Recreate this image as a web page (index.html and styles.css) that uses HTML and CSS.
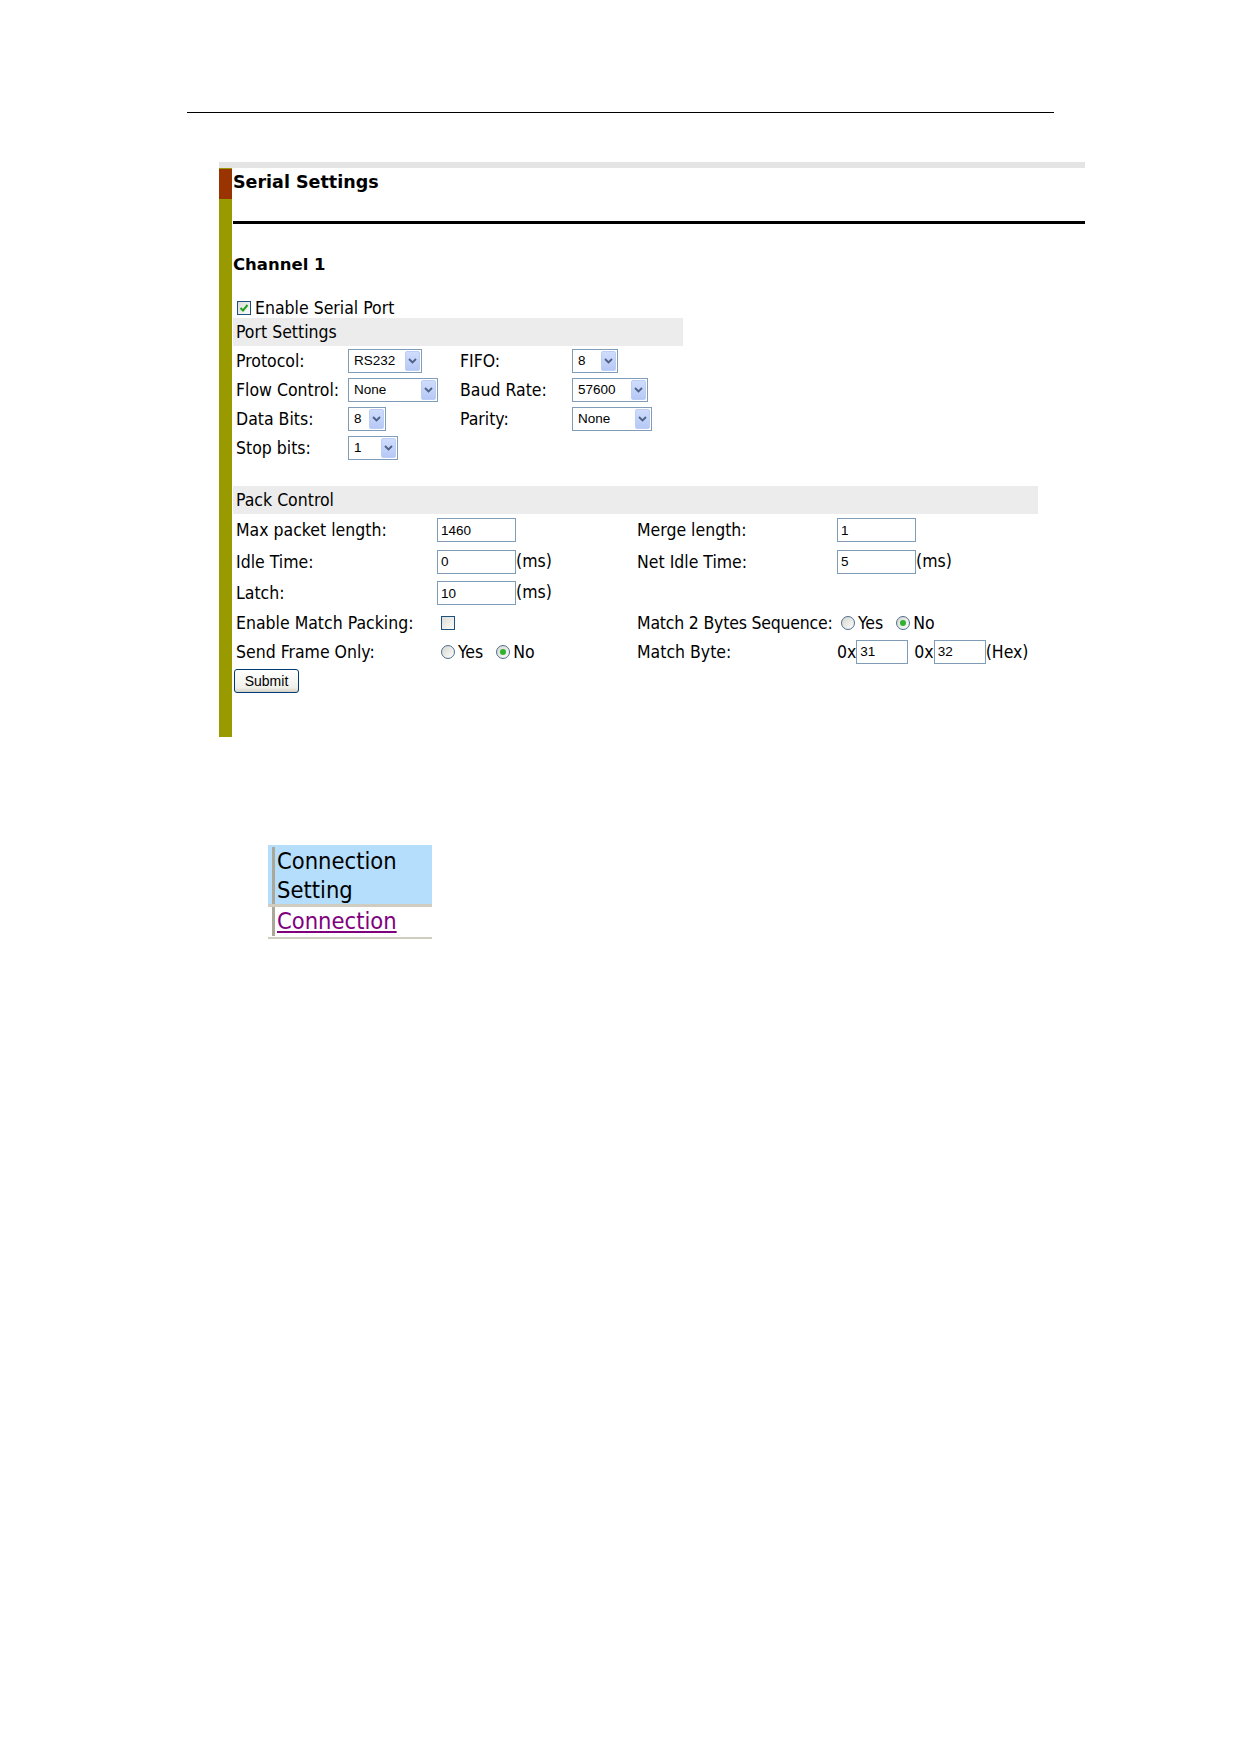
FILE: index.html
```html
<html>
<head>

	<meta charset="utf-8">
	<meta name="viewport" content="width=device-width, user-scalable=no"/>

	<title>Serial Settings</title>

	<link rel="stylesheet" href="styles.css">

</head>
<body>

<div class="page">

	<hr class="rule">

	<div class="panel">
		<div class="panel-top"></div>

		<div class="panel-body">
			<div class="side"><div class="side-mark"></div></div>

			<div class="main">

				<h1>Serial Settings</h1>
				<div class="title-line"></div>

				<h2>Channel 1</h2>

				<div class="enable">
					<span class="chk on"><svg width="10" height="10" viewBox="0 0 10 10"><path d="M1.5 5 L4 7.5 L8.5 2" fill="none" stroke="#21a121" stroke-width="2"/></svg></span>Enable Serial Port
				</div>

				<!-- Port settings -->
				<div class="port">
					<div class="bar">Port Settings</div>

					<div class="lbl">Protocol:</div>
					<div><span class="sel sel-protocol"><span>RS232</span><span class="arrow"><svg width="9" height="6" viewBox="0 0 9 6"><polyline points="1,1 4.5,4.5 8,1" fill="none" stroke="#4d6185" stroke-width="1.8"/></svg></span></span></div>
					<div class="lbl">FIFO:</div>
					<div><span class="sel sel-fifo"><span>8</span><span class="arrow"><svg width="9" height="6" viewBox="0 0 9 6"><polyline points="1,1 4.5,4.5 8,1" fill="none" stroke="#4d6185" stroke-width="1.8"/></svg></span></span></div>

					<div class="lbl">Flow Control:</div>
					<div><span class="sel sel-flow"><span>None</span><span class="arrow"><svg width="9" height="6" viewBox="0 0 9 6"><polyline points="1,1 4.5,4.5 8,1" fill="none" stroke="#4d6185" stroke-width="1.8"/></svg></span></span></div>
					<div class="lbl">Baud Rate:</div>
					<div><span class="sel sel-baud"><span>57600</span><span class="arrow"><svg width="9" height="6" viewBox="0 0 9 6"><polyline points="1,1 4.5,4.5 8,1" fill="none" stroke="#4d6185" stroke-width="1.8"/></svg></span></span></div>

					<div class="lbl">Data Bits:</div>
					<div><span class="sel sel-data"><span>8</span><span class="arrow"><svg width="9" height="6" viewBox="0 0 9 6"><polyline points="1,1 4.5,4.5 8,1" fill="none" stroke="#4d6185" stroke-width="1.8"/></svg></span></span></div>
					<div class="lbl">Parity:</div>
					<div><span class="sel sel-parity"><span>None</span><span class="arrow"><svg width="9" height="6" viewBox="0 0 9 6"><polyline points="1,1 4.5,4.5 8,1" fill="none" stroke="#4d6185" stroke-width="1.8"/></svg></span></span></div>

					<div class="lbl">Stop bits:</div>
					<div><span class="sel sel-stop"><span>1</span><span class="arrow"><svg width="9" height="6" viewBox="0 0 9 6"><polyline points="1,1 4.5,4.5 8,1" fill="none" stroke="#4d6185" stroke-width="1.8"/></svg></span></span></div>
					<div></div>
					<div></div>
				</div>

				<!-- Pack control -->
				<div class="pack">
					<div class="bar">Pack Control</div>

					<div class="lbl">Max packet length:</div>
					<div><input class="txt" type="text" value="1460"></div>
					<div class="lbl">Merge length:</div>
					<div><input class="txt" type="text" value="1"></div>

					<div class="lbl">Idle Time:</div>
					<div><input class="txt" type="text" value="0">(ms)</div>
					<div class="lbl">Net Idle Time:</div>
					<div><input class="txt" type="text" value="5">(ms)</div>

					<div class="lbl">Latch:</div>
					<div><input class="txt" type="text" value="10">(ms)</div>
					<div></div>
					<div></div>

					<div class="lbl">Enable Match Packing:</div>
					<div><span class="chk"></span></div>
					<div class="lbl lbl-tight">Match 2 Bytes Sequence:</div>
					<div class="opts"><span class="opt"><span class="radio"></span>Yes</span><span class="opt"><span class="radio on"></span>No</span></div>

					<div class="lbl">Send Frame Only:</div>
					<div class="opts"><span class="opt"><span class="radio"></span>Yes</span><span class="opt"><span class="radio on"></span>No</span></div>
					<div class="lbl">Match Byte:</div>
					<div class="hex">0x<input class="txt txt-hex" type="text" value="31"> 0x<input class="txt txt-hex" type="text" value="32">(Hex)</div>

					<div><button class="submit" type="button">Submit</button></div>
				</div>

			</div>
		</div>
	</div>

	<div class="conn">
		<div class="conn-head"><div class="conn-cell">Connection<br>Setting</div></div>
		<div class="conn-item"><div class="conn-cell"><a href="#">Connection</a></div></div>
	</div>

</div>

</body>
</html>
```

FILE: styles.css
```css
* {
	margin: 0;
	padding: 0;
}

body {
	font: 17.5px "DejaVu Sans Condensed", "DejaVu Sans", sans-serif;
	color: #000;
	background: #fff;
}

.page {
	padding: 112px 0 60px 187px;
}

.rule {
	width: 867px;
	height: 1px;
	border: 0;
	background: #000;
}


/* Panel */

.panel {
	margin: 49px 0 0 32px;
	width: 866px;
}

.panel-top {
	height: 6px;
	background: #e4e4e4;
}

.panel-body {
	display: flex;
}

.side {
	width: 13px;
	flex: none;
	background: #999900;
	padding-top: 1px;
}

.side-mark {
	height: 30px;
	background: #993300;
}

.main {
	flex: 1;
	padding: 0 0 41px 1px;
}

h1 {
	font: bold 17.5px "DejaVu Sans", sans-serif;
	line-height: 20px;
	margin-top: 4px;
}

.title-line {
	height: 3px;
	background: #000;
	margin-top: 29px;
}

h2 {
	font: bold 16.5px "DejaVu Sans", sans-serif;
	line-height: 20px;
	margin-top: 31px;
}

.enable {
	display: flex;
	align-items: center;
	margin-top: 23px;
	line-height: 20px;
	height: 20px;
}

.enable .chk {
	margin: 0 4px 0 4px;
}


/* Controls */

.chk {
	display: inline-flex;
	align-items: center;
	justify-content: center;
	width: 14px;
	height: 14px;
	box-sizing: border-box;
	border: 1px solid #1c5180;
	background: linear-gradient(135deg, #dcdcd7, #fbfbf9);
}

.radio {
	position: relative;
	display: inline-block;
	width: 14px;
	height: 14px;
	box-sizing: border-box;
	border: 1px solid #4c6d8f;
	border-radius: 50%;
	background: linear-gradient(135deg, #d6d6d0, #fdfdfb);
	margin: 0 3px 0 4px;
}

.radio.on::after {
	content: "";
	position: absolute;
	left: 3px;
	top: 3px;
	width: 6px;
	height: 6px;
	border-radius: 50%;
	background: #31b131;
}

.sel {
	display: inline-flex;
	align-items: center;
	justify-content: space-between;
	height: 24px;
	box-sizing: border-box;
	border: 1px solid #7f9db9;
	background: #fff;
	padding-left: 5px;
	font: 13.5px "Liberation Sans", Arial, sans-serif;
	vertical-align: middle;
}

.sel .arrow {
	display: flex;
	align-items: center;
	justify-content: center;
	width: 15px;
	height: 20px;
	margin-right: 1px;
	border: 1px solid #bccdf6;
	box-sizing: border-box;
	border-radius: 2px;
	background: linear-gradient(#cfdcfd, #b6c9f5);
}

.sel-protocol { width: 74px; }
.sel-flow { width: 90px; }
.sel-data { width: 38px; }
.sel-stop { width: 50px; }
.sel-fifo { width: 46px; }
.sel-baud { width: 76px; }
.sel-parity { width: 80px; }

.txt {
	width: 79px;
	height: 24px;
	box-sizing: border-box;
	border: 1px solid #7f9db9;
	padding: 0 3px;
	font: 13.5px "Liberation Sans", Arial, sans-serif;
	color: #000;
	vertical-align: middle;
	outline: none;
}

.txt-hex {
	width: 52px;
}

.submit {
	width: 65px;
	height: 24px;
	margin-left: 1px;
	border: 1px solid #003c74;
	border-radius: 3px;
	background: linear-gradient(#ffffff, #f0f0ea 80%, #d6d0c5);
	font: 14px "Liberation Sans", Arial, sans-serif;
	color: #000;
}


/* Grids */

.bar {
	grid-column: 1 / -1;
	background: #ececec;
	padding-left: 3px;
	line-height: 28px;
	height: 28px;
}

.lbl {
	padding-left: 3px;
	white-space: nowrap;
}

.lbl-tight {
	letter-spacing: -0.2px;
}

.port, .pack {
	display: grid;
	align-items: center;
	white-space: nowrap;
}

.port {
	width: 450px;
	grid-template-columns: 115px 109px 115px 111px;
	grid-template-rows: 28px;
	grid-auto-rows: 29px;
}

.pack {
	width: 805px;
	margin-top: 24px;
	grid-template-columns: 204px 197px 203px 201px;
	grid-template-rows: 28px 32px 31px 32px 28px 29px 30px;
}

.pack .chk {
	margin-left: 4px;
	vertical-align: middle;
}

.opts {
	display: flex;
	align-items: center;
}

.opt {
	display: inline-flex;
	align-items: center;
	margin-right: 9px;
}

.hex {
	display: flex;
	align-items: center;
}

.hex .txt:first-of-type {
	margin-right: 6px;
}


/* Connection menu */

.conn {
	width: 164px;
	margin: 108px 0 0 81px;
	font-size: 23.5px;
	line-height: 28.5px;
}

.conn-head {
	background: #b4defc;
	padding: 2px 0 0 4px;
}

.conn-item {
	border-top: 3px solid #d0ccbf;
	border-bottom: 2px solid #d0ccbf;
	padding: 0 0 1.5px 4px;
}

.conn-cell {
	border-left: 3px solid #aca899;
	padding-left: 2px;
}

.conn a {
	color: #800080;
}
```
